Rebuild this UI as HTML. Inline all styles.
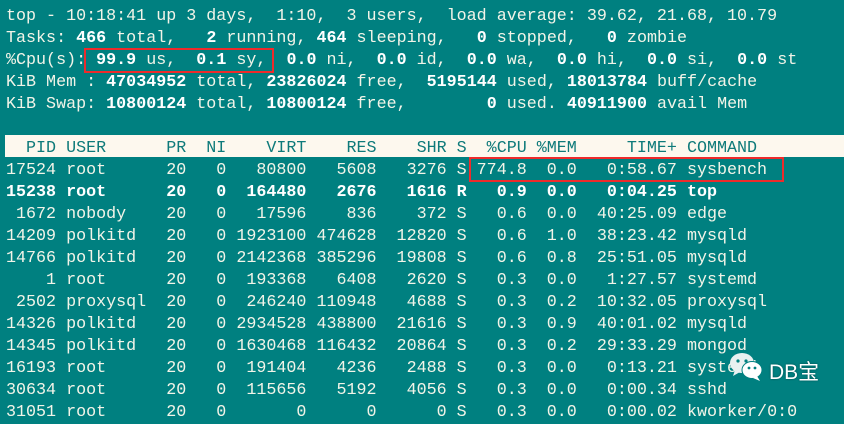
<!DOCTYPE html>
<html><head><meta charset="utf-8"><style>
html,body{margin:0;padding:0;}
body{width:844px;height:406px;overflow:hidden;background:#008080;position:relative;
font-family:"Liberation Mono","DejaVu Sans Mono",monospace;font-size:16.7px;color:#f2f4e8;}
.t{position:absolute;left:6px;top:6px;}
.l{height:22px;line-height:22px;white-space:pre;}
b{font-weight:bold;color:#fff;}
.hd{position:absolute;left:5px;right:0;top:135px;height:22px;background:#fdf8ee;}
.hl{color:#0e7a7a;}
.box{position:absolute;border:2px solid #ee2b2b;box-sizing:border-box;}
.wm{position:absolute;left:769px;top:356px;font-family:"Liberation Sans","Noto Sans CJK SC",sans-serif;font-size:21px;color:#fff;text-shadow:0 0 2px rgba(0,0,0,.4);}
</style></head><body>
<div class="hd"></div>
<div class="t"><div class="l">top - 10:18:41 up 3 days,  1:10,  3 users,  load average: 39.62, 21.68, 10.79</div><div class="l">Tasks: <b>466</b> total,   <b>2</b> running, <b>464</b> sleeping,   <b>0</b> stopped,   <b>0</b> zombie</div><div class="l">%Cpu(s): <b>99.9</b> us,  <b>0.1</b> sy,  <b>0.0</b> ni,  <b>0.0</b> id,  <b>0.0</b> wa,  <b>0.0</b> hi,  <b>0.0</b> si,  <b>0.0</b> st</div><div class="l">KiB Mem : <b>47034952</b> total, <b>23826024</b> free,  <b>5195144</b> used, <b>18013784</b> buff/cache</div><div class="l">KiB Swap: <b>10800124</b> total, <b>10800124</b> free,        <b>0</b> used. <b>40911900</b> avail Mem</div><div class="l"> </div><div class="l hl">  PID USER      PR  NI    VIRT    RES    SHR S  %CPU %MEM     TIME+ COMMAND</div><div class="l">17524 root      20   0   80800   5608   3276 S 774.8  0.0   0:58.67 sysbench</div><div class="l"><b>15238 root      20   0  164480   2676   1616 R   0.9  0.0   0:04.25 top</b></div><div class="l"> 1672 nobody    20   0   17596    836    372 S   0.6  0.0  40:25.09 edge</div><div class="l">14209 polkitd   20   0 1923100 474628  12820 S   0.6  1.0  38:23.42 mysqld</div><div class="l">14766 polkitd   20   0 2142368 385296  19808 S   0.6  0.8  25:51.05 mysqld</div><div class="l">    1 root      20   0  193368   6408   2620 S   0.3  0.0   1:27.57 systemd</div><div class="l"> 2502 proxysql  20   0  246240 110948   4688 S   0.3  0.2  10:32.05 proxysql</div><div class="l">14326 polkitd   20   0 2934528 438800  21616 S   0.3  0.9  40:01.02 mysqld</div><div class="l">14345 polkitd   20   0 1630468 116432  20864 S   0.3  0.2  29:33.29 mongod</div><div class="l">16193 root      20   0  191404   4236   2488 S   0.3  0.0   0:13.21 systemd</div><div class="l">30634 root      20   0  115656   5192   4056 S   0.3  0.0   0:00.34 sshd</div><div class="l">31051 root      20   0       0      0      0 S   0.3  0.0   0:00.02 kworker/0:0</div></div>
<div class="box" style="left:84px;top:48px;width:190px;height:25px;"></div>
<div class="box" style="left:469px;top:157px;width:315px;height:25px;"></div>
<svg style="position:absolute;left:729px;top:352px" width="36" height="30" viewBox="0 0 36 30">
<ellipse cx="13" cy="11" rx="12" ry="10" fill="#e9f1f1"/>
<path d="M6 18 L4 24 L11 20 Z" fill="#e9f1f1"/>
<circle cx="9" cy="9" r="1.6" fill="#008080"/><circle cx="17" cy="9" r="1.6" fill="#008080"/>
<ellipse cx="23" cy="18" rx="10" ry="8.5" fill="#fff" stroke="#008080" stroke-width="1"/>
<path d="M28 24 L31 29 L24 26 Z" fill="#fff"/>
<circle cx="20" cy="16" r="1.4" fill="#008080"/><circle cx="26" cy="16" r="1.4" fill="#008080"/>
</svg>
<div class="wm">DB宝</div>
</body></html>
